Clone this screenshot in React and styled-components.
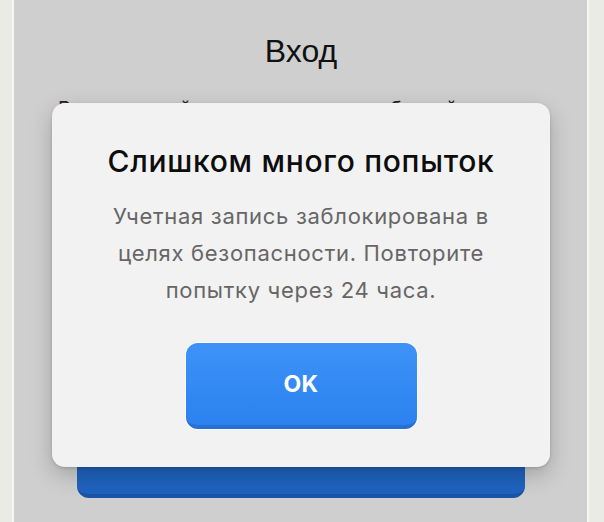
import React from "react";
import styled, { createGlobalStyle } from "styled-components";

const GlobalStyle = createGlobalStyle`
  html, body, #root {
    margin: 0;
    height: 100%;
  }
  body {
    font-family: Inter, "Noto Sans", "DejaVu Sans", sans-serif;
    background: #ecece8;
    overflow: hidden;
  }
`;

const Frame = styled.div`
  display: flex;
  width: 604px;
  height: 522px;
  position: relative;
`;

const Edge = styled.div`
  flex: 0 0 ${(p) => p.$width}px;
  box-sizing: border-box;
  background: #ebebe6;
  border-${(p) => (p.$side === "left" ? "right" : "left")}: 2px solid #f6f6f3;
`;

const Panel = styled.main`
  flex: 1;
  min-width: 0;
  overflow: hidden;
  background: #cfcfcf;
  display: flex;
  flex-direction: column;
  align-items: center;
  padding: 32px 62px 24px 63px;
`;

const PageTitle = styled.h1`
  margin: 0;
  font-family: "Liberation Sans", Arial, sans-serif;
  font-weight: 400;
  font-size: 32px;
  color: #111;
  line-height: 38px;
`;

const Intro = styled.p`
  margin: 27px 0 0 -19px;
  align-self: flex-start;
  font-size: 20px;
  line-height: 24px;
  color: #222;
  white-space: nowrap;
`;

const SubmitButton = styled.button`
  margin-top: auto;
  width: 100%;
  height: 60px;
  border: 0;
  border-radius: 12px;
  background: #1f63c0;
  border-bottom: 4px solid #1a54a6;
`;

const Modal = styled.div`
  position: absolute;
  left: 52px;
  top: 103px;
  width: 498px;
  box-sizing: border-box;
  padding: 40px 20px 38px;
  background: #f2f2f2;
  border-radius: 13px;
  box-shadow: 0 8px 22px rgba(0, 0, 0, 0.22), 0 1px 3px rgba(0, 0, 0, 0.15);
  display: flex;
  flex-direction: column;
  align-items: center;
  text-align: center;
`;

const ModalTitle = styled.h2`
  margin: 0;
  font-size: 30px;
  font-weight: 500;
  line-height: 36px;
  color: #0d0d0d;
  letter-spacing: 0.7px;
  white-space: nowrap;
`;

const ModalText = styled.p`
  margin: 19px 0 0;
  font-size: 22px;
  line-height: 37px;
  color: #666;
  letter-spacing: 0.7px;
  white-space: nowrap;
`;

const OkButton = styled.button`
  margin-top: 34px;
  width: 231px;
  height: 86px;
  border: 0;
  border-radius: 12px;
  background: linear-gradient(#3e92f7, #2b82ef);
  border-bottom: 4px solid #2a6fd2;
  box-shadow: 0 0 0 1px rgba(255, 255, 255, 0.7);
  color: #fff;
  font-family: inherit;
  font-size: 23px;
  font-weight: 700;
  letter-spacing: 0.3px;
`;

export default function App() {
  return (
    <>
      <GlobalStyle />
      <Frame>
        <Edge $width={14} $side="left" />
        <Panel>
          <PageTitle>Вход</PageTitle>
          <Intro>Введите свой логин и пароль, чтобы войти</Intro>
          <SubmitButton type="button" />
        </Panel>
        <Edge $width={17} $side="right" />
        <Modal role="alertdialog">
          <ModalTitle>Слишком много попыток</ModalTitle>
          <ModalText>
            Учетная запись заблокирована в
            <br />
            целях безопасности. Повторите
            <br />
            попытку через 24 часа.
          </ModalText>
          <OkButton type="button">OK</OkButton>
        </Modal>
      </Frame>
    </>
  );
}
